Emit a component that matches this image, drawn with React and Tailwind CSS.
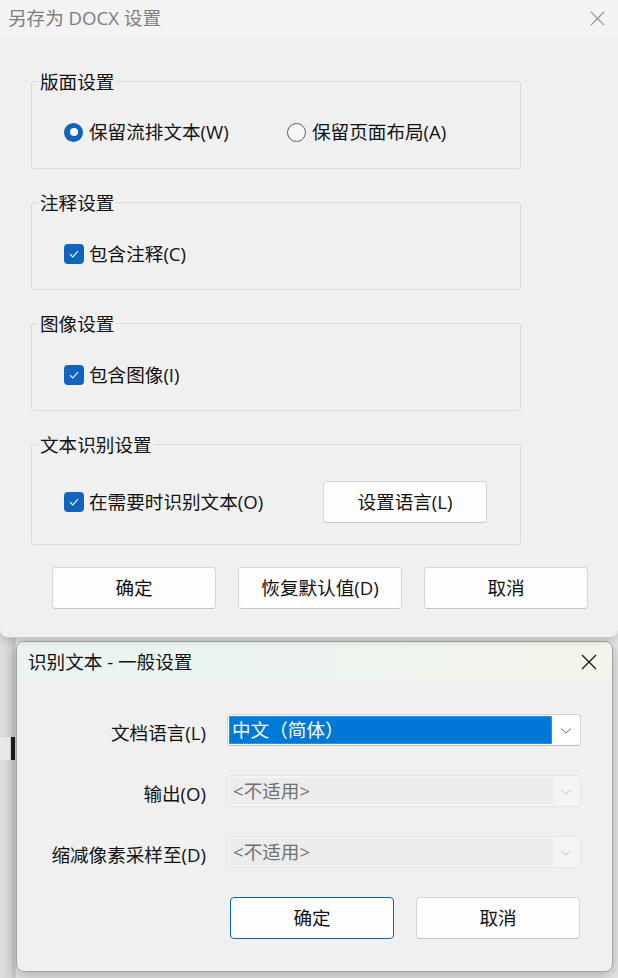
import React from "react";

function CloseX({ color = "#000", size = 16 }) {
  return (
    <svg width={size} height={size} viewBox="0 0 16 16" fill="none">
      <path d="M1 1L15 15M15 1L1 15" stroke={color} strokeWidth="1.2" />
    </svg>
  );
}

function Check() {
  return (
    <span className="w-[20px] h-[20px] rounded-[4px] bg-[#0f64bd] flex items-center justify-center shrink-0">
      <svg width="14" height="14" viewBox="0 0 14 14" fill="none">
        <path d="M3 7.2L5.8 10L11 4.2" stroke="#fff" strokeWidth="1.1" />
      </svg>
    </span>
  );
}

function Radio({ on }) {
  return on ? (
    <span className="w-[19px] h-[19px] rounded-full bg-[#0f64bd] flex items-center justify-center shrink-0">
      <span className="w-[8px] h-[8px] rounded-full bg-white" />
    </span>
  ) : (
    <span className="w-[19px] h-[19px] rounded-full border border-[#5c5c5c] bg-[#f7f7f7] shrink-0" />
  );
}

function Group({ title, h, children, mt }) {
  return (
    <div className={`w-[490px] border border-[#dadada] rounded-[3px] flex flex-col ${h} ${mt}`}>
      <div className="-mt-[12px] ml-[6px] self-start bg-[#f0f0f0] px-[2px] leading-[24px]">{title}</div>
      {children}
    </div>
  );
}

function Btn({ children, primary }) {
  return (
    <div
      className={`w-[164px] h-[42px] rounded-[4px] bg-[#fdfdfd] flex items-center justify-center shrink-0 ${
        primary ? "border border-[#0a63bf]" : "border border-[#d6d6d6] border-b-[#c4c4c4]"
      }`}
    >
      {children}
    </div>
  );
}

function Chevron({ color }) {
  return (
    <svg width="12" height="8" viewBox="0 0 12 8" fill="none">
      <path d="M1 1.5L6 6L11 1.5" stroke={color} strokeWidth="1" />
    </svg>
  );
}

function Combo({ active, text }) {
  if (active) {
    return (
      <div className="w-[354px] h-[32px] bg-white border border-[#d4d4d4] border-b-[#bdbdbd] rounded-[3px] flex items-center pl-[1px]">
        <div className="w-[323px] h-[28px] bg-[#0078d7] outline-1 outline-dotted outline-[#e8843a] -outline-offset-1 flex items-center pl-[3px] text-white">
          {text}
        </div>
        <div className="flex-1 flex items-center justify-center pt-[1px]">
          <Chevron color="#6b6b6b" />
        </div>
      </div>
    );
  }
  return (
    <div className="w-[354px] h-[32px] bg-[#f4f4f4] border border-[#e6e6e6] rounded-[3px] flex items-center p-[2px]">
      <div className="w-[323px] h-[26px] bg-[#ececec] flex items-center pl-[3px] text-[#707070]">{text}</div>
      <div className="flex-1 flex items-center justify-center pt-[1px]">
        <Chevron color="#c4c4c4" />
      </div>
    </div>
  );
}

export default function App() {
  return (
    <div className="w-[618px] h-[978px] overflow-hidden bg-[linear-gradient(90deg,#dedede_0px,#d6d6d6_10px,#c6c6c6_15px,#e6e6e6_16px)] relative font-['Open_Sans','Noto_Sans_CJK_SC',sans-serif] text-[18.6px] text-[#111] leading-[24px]">
      {/* background content */}
      <div className="absolute left-[11px] top-[737px] w-[4px] h-[23px] bg-[#1a1a1a]" />
      <div className="absolute left-[0px] top-[737px] w-[10px] h-[23px] bg-[#e8e8e8]" />

      {/* Dialog 1 */}
      <div className="relative h-[638px] bg-[#f0f0f0] rounded-b-[8px] border-b border-[#c9c9c9] shadow-[0_2px_8px_rgba(0,0,0,0.18)] flex flex-col">
        <div className="h-[36px] bg-[#f3f3f3] flex items-center justify-between pl-[8px] pr-[13px] text-[#7e7e7e]">
          <span>另存为 DOCX 设置</span>
          <CloseX color="#8a8a8a" size={15} />
        </div>
        <div className="pl-[31px] pt-[45px] flex flex-col">
          <Group title="版面设置" h="h-[88px]" mt="">
            <div className="mt-[26px] h-[24px] pl-[32px] flex items-center">
              <div className="w-[223px] flex items-center gap-[6px]">
                <Radio on />
                <span>保留流排文本(W)</span>
              </div>
              <div className="flex items-center gap-[6px]">
                <Radio />
                <span>保留页面布局(A)</span>
              </div>
            </div>
          </Group>
          <Group title="注释设置" h="h-[88px]" mt="mt-[33px]">
            <div className="mt-[27px] h-[24px] pl-[32px] flex items-center gap-[5px]">
              <Check />
              <span>包含注释(C)</span>
            </div>
          </Group>
          <Group title="图像设置" h="h-[88px]" mt="mt-[33px]">
            <div className="mt-[27px] h-[24px] pl-[32px] flex items-center gap-[5px]">
              <Check />
              <span>包含图像(I)</span>
            </div>
          </Group>
          <Group title="文本识别设置" h="h-[101px]" mt="mt-[33px]">
            <div className="mt-[24px] h-[42px] pl-[32px] flex items-center">
              <div className="w-[259px] flex items-center gap-[5px]">
                <Check />
                <span>在需要时识别文本(O)</span>
              </div>
              <Btn>设置语言(L)</Btn>
            </div>
          </Group>
          <div className="mt-[22px] pl-[21px] flex gap-[22px]">
            <Btn>确定</Btn>
            <Btn>恢复默认值(D)</Btn>
            <Btn>取消</Btn>
          </div>
        </div>
      </div>

      {/* Dialog 2 */}
      <div className="mt-[3px] ml-[16px] w-[597px] h-[331px] bg-[#f0f0f0] border border-[#a3a3a3] rounded-[8px] shadow-[0_4px_14px_rgba(0,0,0,0.25)] overflow-hidden flex flex-col">
        <div className="h-[39px] bg-[linear-gradient(90deg,#e9f4f2,#eef4ee_60%,#f3f4ea)] flex items-center justify-between pl-[11px] pr-[15px]">
          <span>识别文本 - 一般设置</span>
          <CloseX color="#111" size={16} />
        </div>
        <div className="mt-[33px] flex flex-col gap-[29px]">
          <div className="flex items-center h-[32px]">
            <div className="w-[189px] text-right pt-[6px]">文档语言(L)</div>
            <div className="ml-[21px]">
              <Combo active text="中文（简体）" />
            </div>
          </div>
          <div className="flex items-center h-[32px]">
            <div className="w-[189px] text-right pt-[6px]">输出(O)</div>
            <div className="ml-[21px]">
              <Combo text="<不适用>" />
            </div>
          </div>
          <div className="flex items-center h-[32px]">
            <div className="w-[189px] text-right pt-[6px]">缩减像素采样至(D)</div>
            <div className="ml-[21px]">
              <Combo text="<不适用>" />
            </div>
          </div>
          <div className="ml-[213px] flex gap-[22px]">
            <Btn primary>确定</Btn>
            <Btn>取消</Btn>
          </div>
        </div>
      </div>
    </div>
  );
}
